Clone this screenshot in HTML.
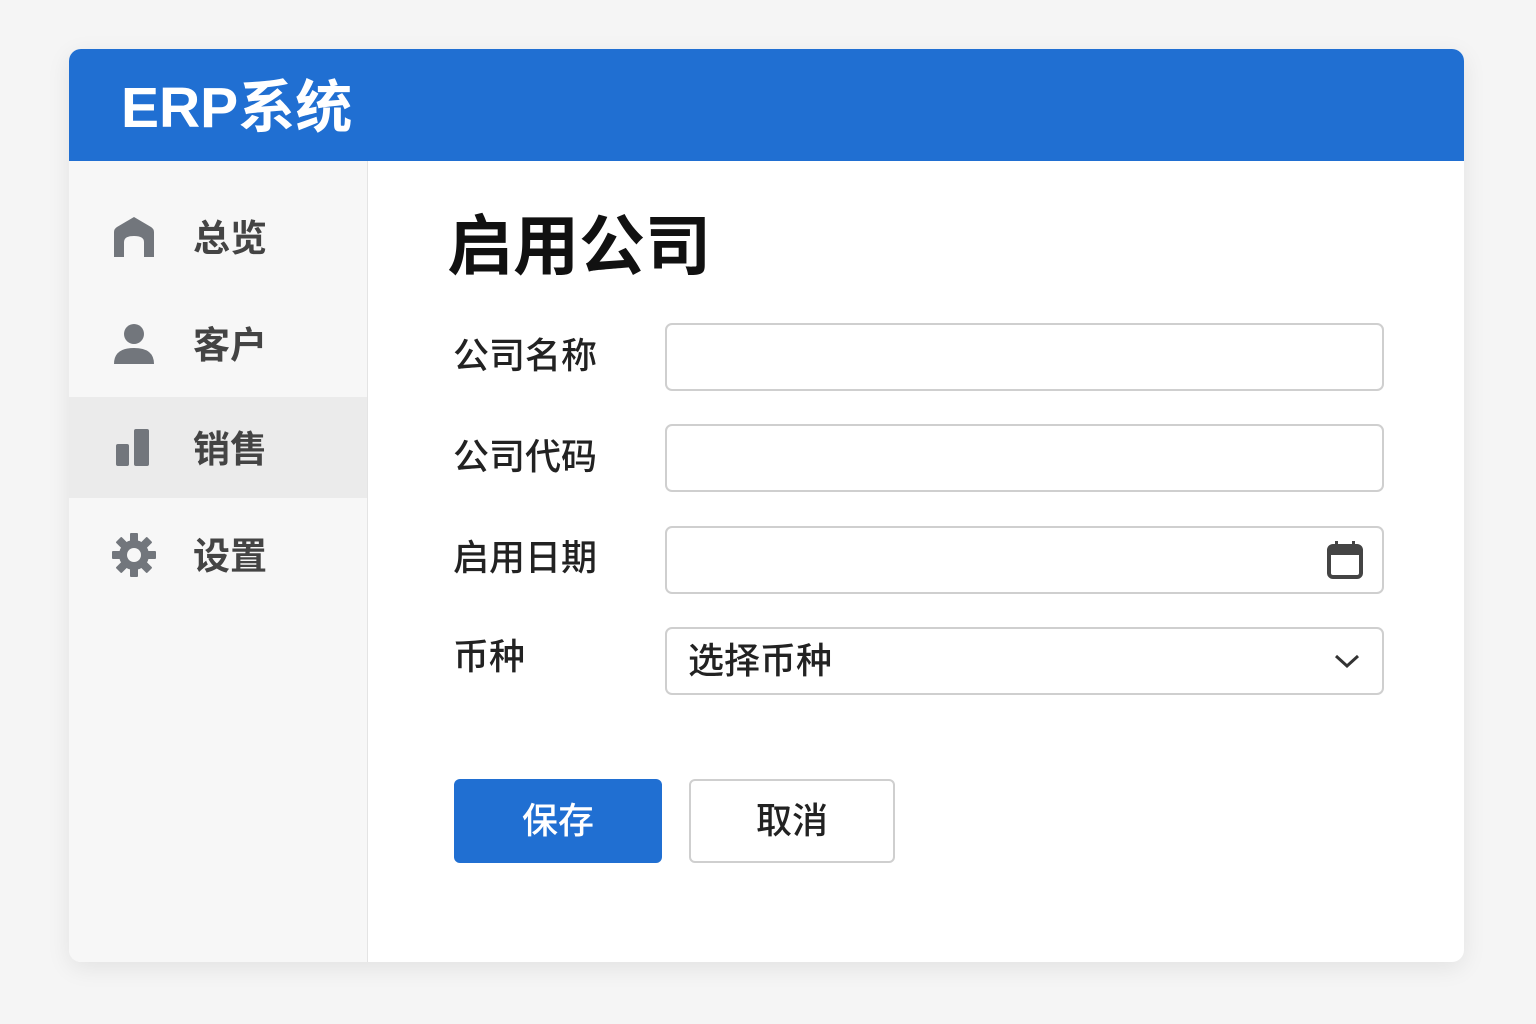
<!DOCTYPE html>
<html><head><meta charset="utf-8"><style>
*{margin:0;padding:0;box-sizing:border-box}
body{width:1536px;height:1024px;background:#f5f5f5;position:relative;overflow:hidden;font-family:"Liberation Sans","Noto Sans CJK SC",sans-serif}
.card{position:absolute;left:69px;top:49px;width:1395px;height:913px;background:#fff;border-radius:12px;box-shadow:0 6px 24px rgba(0,0,0,.08);overflow:hidden}
.hdr{position:absolute;left:0;top:0;width:100%;height:112px;background:#206fd2;color:#fff;font-weight:bold;font-size:57px;line-height:118px;padding-left:52px}
.side{position:absolute;left:0;top:112px;width:299px;height:801px;background:#f7f7f7;border-right:1px solid #e4e4e4}
.item{position:absolute;left:0;width:298px;height:101px;display:flex;align-items:center}
.item.act{background:#ebebeb}
.item svg{position:absolute;left:43px}
.item span{position:absolute;left:124px;font-size:37px;font-weight:bold;color:#444;line-height:40px;top:33px}
.t{position:absolute;font-weight:bold;font-size:66px;color:#111;left:378px;top:152px;line-height:90px}
.lbl{position:absolute;left:384px;font-size:36px;color:#222;line-height:40px;font-weight:500}
.inp{position:absolute;left:596px;width:719px;height:68px;border:2px solid #cfcfcf;border-radius:7px;background:#fff}
.btn{position:absolute;top:730px;height:84px;border-radius:6px;font-size:36px;line-height:80px;text-align:center;font-weight:500}
</style></head><body>
<div class="card">
<div class="hdr">ERP系统</div>
<div class="side">
 <div class="item" style="top:25px"><svg width="44" height="44" viewBox="0 0 44 44"><path d="M2 42V17Q2 14 5 12L22 2L39 12Q42 14 42 17V42H32V27Q32 21 22 21Q12 21 12 27V42Z" fill="#72767c"/></svg><span>总览</span></div>
 <div class="item" style="top:132px"><svg width="44" height="44" viewBox="0 0 44 44"><circle cx="22" cy="12" r="10" fill="#72767c"/><path d="M2 42Q2 26 22 26Q42 26 42 42Z" fill="#72767c"/></svg><span>客户</span></div>
 <div class="item act" style="top:236px"><svg width="44" height="44" viewBox="0 0 44 44"><rect x="4" y="18" width="13" height="22" rx="2" fill="#72767c"/><rect x="22" y="3" width="15" height="37" rx="2" fill="#72767c"/></svg><span>销售</span></div>
 <div class="item" style="top:343px"><svg width="44" height="44" viewBox="0 0 44 44"><g fill="#72767c"><circle cx="22" cy="22" r="15"/><g id="g"><rect x="18" y="0" width="8" height="10" rx="1"/><rect x="18" y="34" width="8" height="10" rx="1"/></g><use href="#g" transform="rotate(45 22 22)"/><use href="#g" transform="rotate(90 22 22)"/><use href="#g" transform="rotate(135 22 22)"/></g><circle cx="22" cy="22" r="7" fill="#f7f7f7"/></svg><span>设置</span></div>
</div>
<div class="t">启用公司</div>
<div class="lbl" style="top:287px">公司名称</div><div class="inp" style="top:274px"></div>
<div class="lbl" style="top:388px">公司代码</div><div class="inp" style="top:375px"></div>
<div class="lbl" style="top:489px">启用日期</div><div class="inp" style="top:477px"><svg style="position:absolute;right:18px;top:12px" width="38" height="40" viewBox="0 0 38 40"><rect x="3" y="6" width="32" height="31" rx="4" fill="none" stroke="#444" stroke-width="4"/><rect x="3" y="6" width="32" height="9" fill="#444"/><rect x="9" y="1" width="3" height="7" fill="#444"/><rect x="26" y="1" width="3" height="7" fill="#444"/></svg></div>
<div class="lbl" style="top:588px">币种</div><div class="inp" style="top:578px"><span style="position:absolute;left:21px;top:12px;font-size:36px;color:#222;line-height:40px;font-weight:500">选择币种</span><svg style="position:absolute;right:22px;top:24px" width="26" height="16" viewBox="0 0 26 16"><path d="M2 3L13 13L24 3" fill="none" stroke="#333" stroke-width="3"/></svg></div>
<div class="btn" style="left:385px;width:208px;background:#206fd2;color:#fff;line-height:84px">保存</div>
<div class="btn" style="left:620px;width:206px;border:2px solid #cfcfcf;color:#222">取消</div>
</div>
</body></html>
